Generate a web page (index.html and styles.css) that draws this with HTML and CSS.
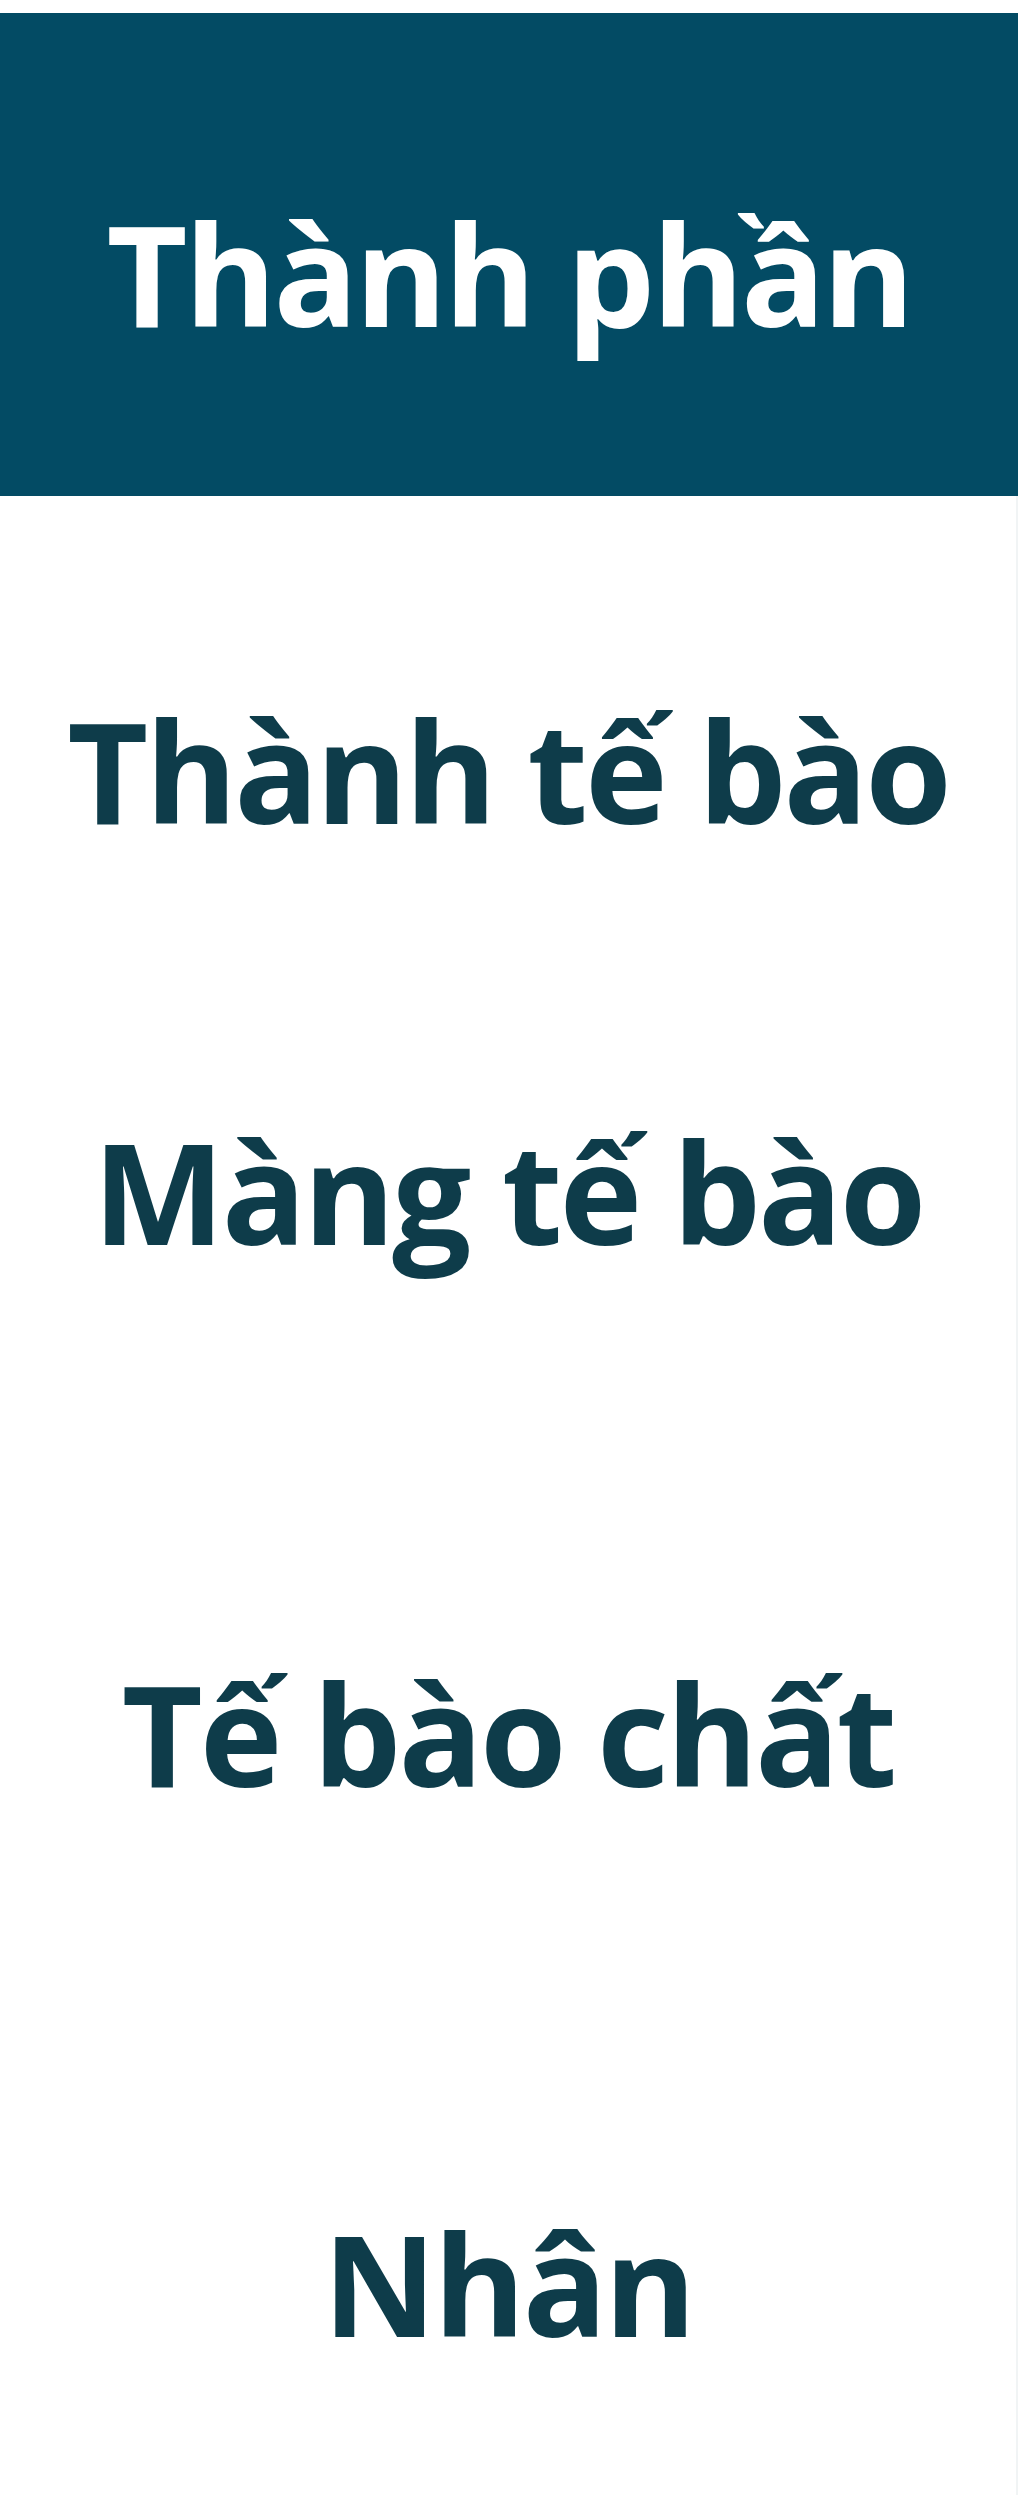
FILE: index.html
```html
<!DOCTYPE html>
<html lang="vi">
<head>
<meta charset="utf-8">
<title>Thành phần</title>
<link rel="stylesheet" href="styles.css">
</head>
<body>
<div class="table">
  <div class="head">Thành phần</div>
  <div class="row row-1">Thành tế bào</div>
  <div class="row row-2">Màng tế bào</div>
  <div class="row row-3">Tế bào chất</div>
  <div class="row row-4">Nhân</div>
</div>
</body>
</html>
```
FILE: styles.css
```css
html, body {
  margin: 0;
  padding: 0;
  background: #ffffff;
}
body {
  width: 1024px;
  height: 2495px;
  overflow: hidden;
}
.table {
  width: 1018px;
  font-family: "Open Sans", "Noto Sans", sans-serif;
  font-weight: 700;
  font-size: 140px;
  line-height: 1;
  text-align: center;
  padding-top: 13px;
  letter-spacing: -3px;
}
.head {
  box-sizing: border-box;
  height: 483px;
  padding-top: 190px;
  background: #034b64;
  color: #ffffff;
}
.row {
  color: #0e3c4a;
  border-right: 2px solid #f1f4f5;
}
.row-1 { padding-top: 204px; }
.row-2 { padding-top: 281px; }
.row-3 { padding-top: 402px; }
.row-4 { padding-top: 410px; padding-bottom: 200px; }
```
